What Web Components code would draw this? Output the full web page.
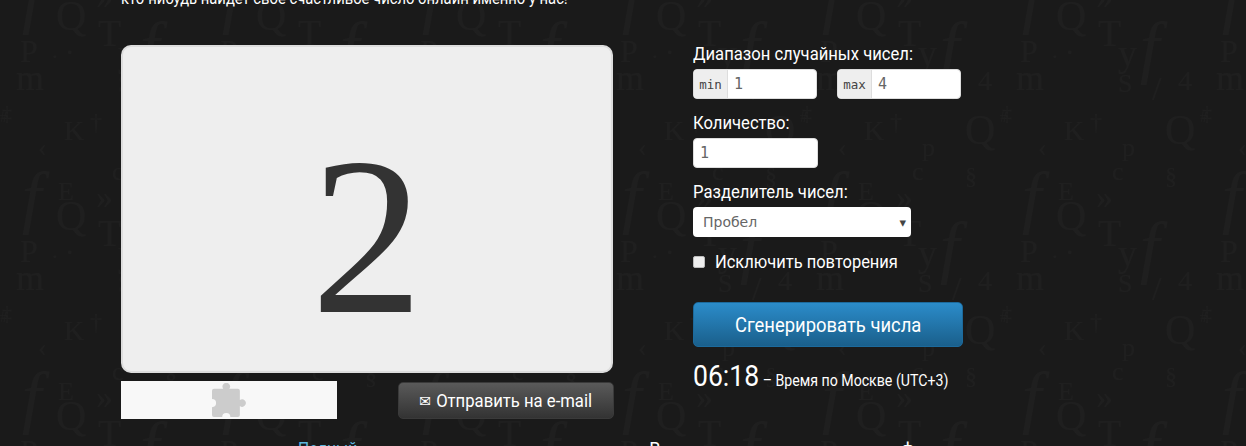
<!DOCTYPE html>
<html lang="ru">
<head>
<meta charset="utf-8">
<title>Генератор случайных чисел</title>
<style>
  html, body { margin: 0; height: 446px; overflow: hidden; background: #1a1a1a; }
  body {
    font-family: "Roboto", "Liberation Sans", sans-serif;
    color: #fff;
    background-color: #1a1a1a;
  }
</style>
</head>
<body>
<rnd-app></rnd-app>

<script>
// faint tile of math letters behind the page: [glyph, x, baseline, size, italic]
const tileGlyphs = [
    ['‡', 2, 120, 20], ['K', 64, 140, 28], ['‹', 38, 156, 26], ['Q', 165, 144, 42], ['§', 165, 184, 24],
    ['f', 22, 20, 70, 1], ['f', 22, 220, 70, 1], ['E', 58, 200, 26], ['»', 96, 208, 34], ['»', 96, 8, 34],
    ['Q', 56, 30, 42], ['T', 98, 46, 38], ['y', 118, 66, 38], ['f', 140, 70, 70, 1], ['P', 20, 62, 32],
    ['.', 66, 54, 30], ['.', 52, 58, 22], ['m', 16, 90, 36], ['4', 178, 90, 28], ['S', 118, 92, 26],
    ['/', 152, 100, 34], ['#', 0, 122, 14], ['†', 90, 130, 24], ['p', 122, 156, 26], ['c', 112, 180, 26]
];
const tileSvg = `<svg xmlns="http://www.w3.org/2000/svg" width="200" height="200">` +
    tileGlyphs.map(([g, x, y, size, italic]) =>
        `<text x="${x}" y="${y}" font-size="${size}" font-family="Liberation Serif, serif" fill="#1f1f1f"` +
        `${italic ? ' font-style="italic"' : ''}>${g}</text>`).join('') + `</svg>`;
document.body.style.backgroundImage = `url("data:image/svg+xml,${encodeURIComponent(tileSvg)}")`;

class RndField extends HTMLElement {
    constructor() {
        super();
        const shadowRoot = this.attachShadow({ mode: 'open' });
        shadowRoot.innerHTML = `
          <style>
              :host { display: block; margin-bottom: 13px; }
              .label {
                display: block;
                font-size: 19px;
                line-height: 21px;
                margin-bottom: 5px;
                white-space: nowrap;
                transform: scaleX(0.875);
                transform-origin: left;
              }
          </style>
          <span class="label"></span>
          <slot></slot>
        `;
        shadowRoot.querySelector('.label').textContent = this.getAttribute('label');
    }
}
customElements.define('rnd-field', RndField);

class RndInput extends HTMLElement {
    constructor() {
        super();
        const shadowRoot = this.attachShadow({ mode: 'open' });
        shadowRoot.innerHTML = `
          <style>
              :host {
                display: inline-flex;
                width: 124px;
                height: 30px;
                box-sizing: border-box;
                background: #fff;
                border: 1px solid #ddd;
                border-radius: 4px;
                overflow: hidden;
                color: #666;
              }
              .addon {
                display: flex;
                align-items: center;
                justify-content: center;
                width: 34px;
                flex: none;
                box-sizing: border-box;
                background: #eee;
                border-right: 1px solid #ddd;
                font-family: "DejaVu Sans Mono", monospace;
                font-size: 12.5px;
                color: #444;
              }
              .addon:empty { display: none; }
              .value {
                display: flex;
                align-items: center;
                padding-left: 6px;
                font-family: "DejaVu Sans Mono", monospace;
                font-size: 15px;
              }
          </style>
          <span class="addon"></span>
          <span class="value"></span>
        `;
        shadowRoot.querySelector('.addon').textContent = this.getAttribute('addon') || '';
        shadowRoot.querySelector('.value').textContent = this.getAttribute('value');
    }
}
customElements.define('rnd-input', RndInput);

class RndSelect extends HTMLElement {
    constructor() {
        super();
        const shadowRoot = this.attachShadow({ mode: 'open' });
        shadowRoot.innerHTML = `
          <style>
              :host {
                display: flex;
                align-items: center;
                justify-content: space-between;
                width: 218px;
                height: 30px;
                box-sizing: border-box;
                padding: 0 5px 0 10px;
                background: #fff;
                border-radius: 4px;
                font-family: "DejaVu Sans", "Noto Sans", sans-serif;
                font-size: 14px;
                color: #666;
              }
              .arrow { font-size: 13px; color: #444; }
          </style>
          <slot></slot>
          <span class="arrow">▾</span>
        `;
    }
}
customElements.define('rnd-select', RndSelect);

class RndCheckbox extends HTMLElement {
    constructor() {
        super();
        const shadowRoot = this.attachShadow({ mode: 'open' });
        shadowRoot.innerHTML = `
          <style>
              :host {
                display: flex;
                align-items: center;
                gap: 10px;
                font-size: 19px;
                line-height: 24px;
              }
              .box {
                width: 12px;
                height: 12px;
                box-sizing: border-box;
                background: #eee;
                border: 1px solid #bbb;
                border-radius: 2px;
              }
              .text {
                white-space: nowrap;
                transform: scaleX(0.867);
                transform-origin: left;
              }
          </style>
          <span class="box"></span>
          <span class="text"><slot></slot></span>
        `;
    }
}
customElements.define('rnd-checkbox', RndCheckbox);

class RndButton extends HTMLElement {
    constructor() {
        super();
        const shadowRoot = this.attachShadow({ mode: 'open' });
        shadowRoot.innerHTML = `
          <style>
              :host {
                display: flex;
                align-items: center;
                justify-content: center;
                box-sizing: border-box;
                border-radius: 5px;
                color: #fff;
                cursor: pointer;
              }
              :host([tone="blue"]) {
                width: 270px;
                height: 45px;
                font-size: 21px;
                background: linear-gradient(#2b8cca, #1a5f8b);
                border: 1px solid #1c6a9c;
              }
              :host([tone="dark"]) {
                width: 216px;
                height: 37px;
                font-size: 19px;
                background: linear-gradient(#5a5a5a, #333);
                border: 1px solid #3a3a3a;
              }
              .text {
                display: inline-block;
                white-space: nowrap;
                transform: scaleX(0.877);
              }
          </style>
          <span class="text"><slot></slot></span>
        `;
    }
}
customElements.define('rnd-button', RndButton);

class RndResult extends HTMLElement {
    constructor() {
        super();
        const shadowRoot = this.attachShadow({ mode: 'open' });
        shadowRoot.innerHTML = `
          <style>
              :host {
                display: flex;
                align-items: center;
                justify-content: center;
                width: 492px;
                height: 328px;
                box-sizing: border-box;
                padding-top: 54px;
                background: #eee;
                border: 2px solid #ddd;
                border-radius: 10px;
                color: #333;
                font-family: "Liberation Serif", serif;
                font-size: 224px;
                line-height: 1;
              }
          </style>
          <slot></slot>
        `;
    }
}
customElements.define('rnd-result', RndResult);

class RndPlugin extends HTMLElement {
    constructor() {
        super();
        const shadowRoot = this.attachShadow({ mode: 'open' });
        shadowRoot.innerHTML = `
          <style>
              :host {
                display: flex;
                align-items: center;
                justify-content: center;
                width: 216px;
                height: 38px;
                background: #f8f8f8;
              }
              svg { display: block; width: 34px; height: 34px; }
          </style>
          <svg viewBox="0 0 100 100" aria-hidden="true">
            <path fill="#ccc" d="M6 17H33A11 11 0 1 1 51 17H76A6 6 0 0 1 82 23V50A11 11 0 1 1 82 68V94A6 6 0 0 1 76 100H54A12 12 0 0 0 30 100H6A6 6 0 0 1 0 94V71A12 12 0 0 0 0 47V23A6 6 0 0 1 6 17Z"/>
          </svg>
        `;
    }
}
customElements.define('rnd-plugin', RndPlugin);

class RndClock extends HTMLElement {
    constructor() {
        super();
        const shadowRoot = this.attachShadow({ mode: 'open' });
        shadowRoot.innerHTML = `
          <style>
              :host {
                display: block;
                font-size: 16px;
                line-height: 36px;
                white-space: nowrap;
                transform: scaleX(0.885);
                transform-origin: left;
              }
              .time { font-size: 30px; }
          </style>
          <span class="time"></span> – <slot></slot>
        `;
        shadowRoot.querySelector('.time').textContent = this.getAttribute('time');
    }
}
customElements.define('rnd-clock', RndClock);

class RndApp extends HTMLElement {
    constructor() {
        super();
        const shadowRoot = this.attachShadow({ mode: 'open' });
        shadowRoot.innerHTML = `
          <style>
              :host { display: block; padding-left: 121px; width: 1000px; }
              .intro {
                margin: -12px 0 0;
                font-size: 17px;
                line-height: 20px;
                white-space: nowrap;
                transform: scaleX(0.87);
                transform-origin: left;
              }
              .columns {
                display: grid;
                grid-template-columns: 492px 270px;
                column-gap: 80px;
                margin-top: 37px;
              }
              .left-foot {
                display: flex;
                justify-content: space-between;
                align-items: flex-start;
                margin-top: 8px;
              }
              .left-foot rnd-button { margin-top: 1px; margin-right: -1px; }
              .mail { font-family: "DejaVu Sans", sans-serif; font-size: 16px; margin-right: 6px; }
              .right { margin-top: -2px; }
              .pair { display: flex; gap: 20px; }
              .qty { width: 125px; }
              rnd-checkbox { margin: 12px 0 28px; }
              rnd-clock { margin-top: 11px; }
              .outline {
                display: flex;
                margin: 20px 0 0 177px;
                font-size: 18px;
                line-height: 20px;
              }
              .outline a { color: #5bb8e0; text-decoration: none; display: inline-block; transform: scaleX(0.87); transform-origin: left; }
              .outline .mid { margin-left: 283px; }
              .outline .end { margin-left: 241px; }
          </style>
          <p class="intro">кто-нибудь найдет свое счастливое число онлайн именно у нас!</p>
          <div class="columns">
            <div class="left">
              <rnd-result>2</rnd-result>
              <div class="left-foot">
                <rnd-plugin></rnd-plugin>
                <rnd-button tone="dark"><span class="mail">✉</span>Отправить на e-mail</rnd-button>
              </div>
            </div>
            <div class="right">
              <rnd-field label="Диапазон случайных чисел:">
                <div class="pair">
                  <rnd-input addon="min" value="1"></rnd-input>
                  <rnd-input addon="max" value="4"></rnd-input>
                </div>
              </rnd-field>
              <rnd-field label="Количество:">
                <rnd-input class="qty" value="1"></rnd-input>
              </rnd-field>
              <rnd-field label="Разделитель чисел:">
                <rnd-select>Пробел</rnd-select>
              </rnd-field>
              <rnd-checkbox>Исключить повторения</rnd-checkbox>
              <rnd-button tone="blue">Сгенерировать числа</rnd-button>
              <rnd-clock time="06:18">Время по Москве (UTC+3)</rnd-clock>
            </div>
          </div>
          <div class="outline">
            <a href="#">Полный</a>
            <span class="mid">В</span>
            <span class="end">ф</span>
          </div>
        `;
    }
}
customElements.define('rnd-app', RndApp);
</script>
</body>
</html>
